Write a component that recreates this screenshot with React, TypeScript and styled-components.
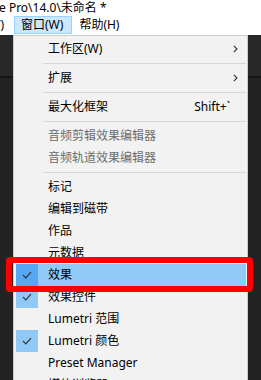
import React from "react";
import styled, { createGlobalStyle, css } from "styled-components";

const Global = createGlobalStyle`
  html, body {
    margin: 0;
    padding: 0;
    width: 261px;
    height: 380px;
    overflow: hidden;
    background: #232323;
    font-family: "Noto Sans", "Noto Sans CJK SC", sans-serif;
    font-size: 12px;
  }
`;

const Page = styled.div`
  position: relative;
  width: 261px;
  height: 380px;
  overflow: hidden;
  display: flex;
  flex-direction: column;
`;

const TitleBar = styled.div`
  height: 16px;
  background: #ffffff;
  display: flex;
  align-items: center;
  overflow: hidden;
  white-space: nowrap;
`;

const TitleText = styled.span`
  margin-left: -1px;
  color: #000;
  font-size: 12px;
  line-height: 16px;
`;

const MenuBar = styled.div`
  height: 19px;
  background: #ffffff;
  display: flex;
  align-items: flex-start;
  overflow: hidden;
  white-space: nowrap;
`;

const MenuBarItem = styled.div<{ $active?: boolean; $lead?: boolean }>`
  box-sizing: border-box;
  height: 18px;
  padding: 0 8px 0 6px;
  border: 1px solid transparent;
  display: flex;
  align-items: center;
  line-height: 16px;
  color: #000;
  ${(p) =>
    p.$active &&
    css`
      background: #cce8ff;
      border-color: #99d1ff;
    `}
  ${(p) =>
    p.$lead &&
    css`
      width: 54px;
      margin-left: -40px;
      justify-content: flex-end;
      padding-right: 9px;
      flex-shrink: 0;
    `}
`;

const Workspace = styled.div`
  flex: 1;
  background: #232323;
  display: flex;
  flex-direction: column;
`;

const PanelHeader = styled.div`
  height: 41px;
  background: #282828;
`;

const PanelDivider = styled.div`
  height: 2px;
  background: #151515;
`;

const Dropdown = styled.div`
  position: absolute;
  left: 13px;
  top: 35px;
  width: 235px;
  box-sizing: border-box;
  border: 1px solid #cccccc;
  border-bottom: none;
  padding: 2px 1px 0 2px;
  background: #f2f2f2;
  height: 360px;
  display: flex;
  flex-direction: column;
`;

const Item = styled.div<{ $highlight?: boolean; $disabled?: boolean }>`
  display: grid;
  grid-template-columns: 22px 1fr auto 16px;
  align-items: center;
  height: 22px;
  flex-shrink: 0;
  color: ${(p) => (p.$disabled ? "#6d6d6d" : "#000")};
  background: ${(p) => (p.$highlight ? "#91c9f7" : "transparent")};
  white-space: nowrap;
`;

const CheckCell = styled.div<{ $checked?: boolean; $highlight?: boolean }>`
  width: 22px;
  height: 22px;
  display: flex;
  align-items: center;
  justify-content: center;
  background: ${(p) =>
    p.$checked ? (p.$highlight ? "#56a8f4" : "#90c8f6") : "transparent"};
`;

const Label = styled.span`
  padding-left: 10px;
  line-height: 22px;
`;

const Shortcut = styled.span`
  line-height: 22px;
  padding-left: 20px;
`;

const ArrowCell = styled.div`
  display: flex;
  align-items: center;
  padding-left: 3px;
  height: 22px;
`;

const Separator = styled.div`
  height: 7px;
  flex-shrink: 0;
  display: flex;
  flex-direction: column;
  padding-left: 27px;
  box-sizing: border-box;
  &::before {
    content: "";
    display: block;
    margin-top: 3px;
    height: 1px;
    background: #d7d7d7;
  }
`;

const Annotation = styled.div`
  position: absolute;
  left: 6px;
  top: 257px;
  width: 247px;
  height: 35px;
  box-sizing: border-box;
  border: 6px solid #fe0000;
  border-radius: 4px;
  pointer-events: none;
`;

const Check = () => (
  <svg width="10" height="8" viewBox="0 0 10 8">
    <polyline
      points="1,4 3.8,6.8 9,1.2"
      fill="none"
      stroke="#333"
      strokeWidth="1.2"
    />
  </svg>
);

const Chevron = () => (
  <svg width="5" height="8" viewBox="0 0 5 8">
    <polyline
      points="0.8,0.8 4,4 0.8,7.2"
      fill="none"
      stroke="#333"
      strokeWidth="1.1"
    />
  </svg>
);

type Entry =
  | { sep: true }
  | {
      sep?: false;
      label: string;
      sub?: boolean;
      shortcut?: string;
      disabled?: boolean;
      checked?: boolean;
      highlight?: boolean;
    };

const entries: Entry[] = [
  { label: "工作区(W)", sub: true },
  { sep: true },
  { label: "扩展", sub: true },
  { sep: true },
  { label: "最大化框架", shortcut: "Shift+`" },
  { sep: true },
  { label: "音频剪辑效果编辑器", disabled: true },
  { label: "音频轨道效果编辑器", disabled: true },
  { sep: true },
  { label: "标记" },
  { label: "编辑到磁带" },
  { label: "作品" },
  { label: "元数据" },
  { label: "效果", checked: true, highlight: true },
  { label: "效果控件", checked: true },
  { label: "Lumetri 范围" },
  { label: "Lumetri 颜色", checked: true },
  { label: "Preset Manager" },
  { label: "媒体浏览器" },
];

export default function App() {
  return (
    <>
      <Global />
      <Page>
        <TitleBar>
          <TitleText>e Pro\14.0\未命名 *</TitleText>
        </TitleBar>
        <MenuBar>
          <MenuBarItem $lead>视图(V)</MenuBarItem>
          <MenuBarItem $active>窗口(W)</MenuBarItem>
          <MenuBarItem>帮助(H)</MenuBarItem>
        </MenuBar>
        <Workspace>
          <PanelHeader />
          <PanelDivider />
        </Workspace>
        <Dropdown>
          {entries.map((e, i) =>
            e.sep ? (
              <Separator key={i} />
            ) : (
              <Item key={i} $highlight={e.highlight} $disabled={e.disabled}>
                <CheckCell $checked={e.checked} $highlight={e.highlight}>
                  {e.checked && <Check />}
                </CheckCell>
                <Label>{e.label}</Label>
                <Shortcut>{e.shortcut ?? ""}</Shortcut>
                <ArrowCell>{e.sub && <Chevron />}</ArrowCell>
              </Item>
            )
          )}
        </Dropdown>
        <Annotation />
      </Page>
    </>
  );
}
